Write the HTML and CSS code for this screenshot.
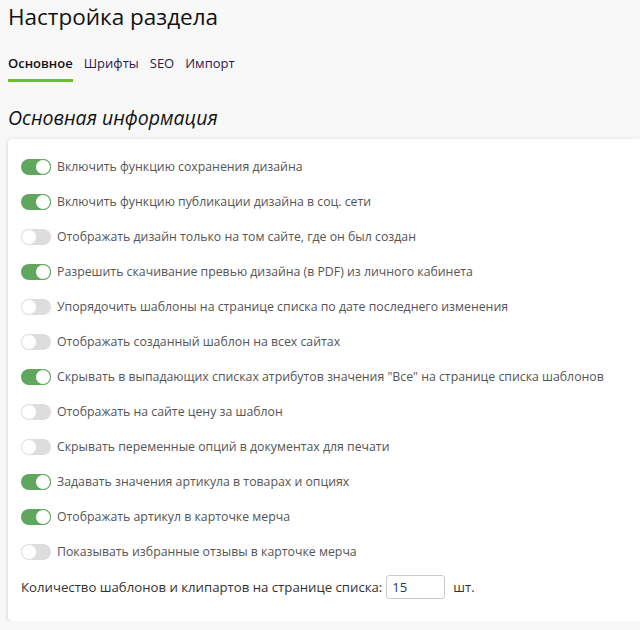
FILE: index.html
```html
<!DOCTYPE html>
<html lang="ru">
<head>
<meta charset="utf-8">
<link rel="stylesheet" href="styles.css">
</head>
<body>
<h1 class="title">Настройка раздела</h1>
<nav class="tabs">
  <a class="tab active">Основное</a>
  <a class="tab">Шрифты</a>
  <a class="tab">SEO</a>
  <a class="tab">Импорт</a>
</nav>
<h2 class="section">Основная информация</h2>
<div class="card">
  <label class="row"><span class="sw on"></span>Включить функцию сохранения дизайна</label>
  <label class="row"><span class="sw on"></span>Включить функцию публикации дизайна в соц. сети</label>
  <label class="row"><span class="sw"></span>Отображать дизайн только на том сайте, где он был создан</label>
  <label class="row"><span class="sw on"></span>Разрешить скачивание превью дизайна (в PDF) из личного кабинета</label>
  <label class="row"><span class="sw"></span>Упорядочить шаблоны на странице списка по дате последнего изменения</label>
  <label class="row"><span class="sw"></span>Отображать созданный шаблон на всех сайтах</label>
  <label class="row"><span class="sw on"></span>Скрывать в выпадающих списках атрибутов значения "Все" на странице списка шаблонов</label>
  <label class="row"><span class="sw"></span>Отображать на сайте цену за шаблон</label>
  <label class="row"><span class="sw"></span>Скрывать переменные опций в документах для печати</label>
  <label class="row"><span class="sw on"></span>Задавать значения артикула в товарах и опциях</label>
  <label class="row"><span class="sw on"></span>Отображать артикул в карточке мерча</label>
  <label class="row"><span class="sw"></span>Показывать избранные отзывы в карточке мерча</label>
  <div class="count">Количество шаблонов и клипартов на странице списка: <input class="num" type="text" value="15"> шт.</div>
</div>
</body>
</html>
```
FILE: styles.css
```css
html, body {
  margin: 0;
  padding: 0;
  background: #f8f8f8;
  font-family: "Open Sans", "Noto Sans", sans-serif;
  color: #333;
  overflow: hidden;
}
body {
  padding: 0 0 0 8px;
}
.title {
  margin: 0;
  padding-top: 2px;
  font-size: 22.5px;
  font-weight: 400;
  line-height: 30px;
  color: #111;
}
.tabs {
  display: flex;
  gap: 11px;
  margin-top: 21px;
  font-size: 13px;
  line-height: 20px;
}
.tab {
  color: #2a1a4a;
  padding-bottom: 6px;
  border-bottom: 3px solid transparent;
}
.tab.active {
  font-weight: 600;
  color: #111;
  border-bottom-color: #6bbf26;
}
.section {
  margin: 22px 0 0;
  font-size: 19.5px;
  font-style: italic;
  font-weight: 400;
  line-height: 28px;
  color: #111;
}
.card {
  margin-top: 7px;
  background: #fff;
  border-radius: 4px 0 0 4px;
  box-shadow: 0 1px 4px rgba(0,0,0,0.18);
  padding: 10px 0 22px 13px;
}
.row {
  display: flex;
  align-items: center;
  height: 35px;
  font-size: 12.3px;
  color: #555;
}
.sw {
  position: relative;
  width: 30px;
  height: 16px;
  border-radius: 8px;
  background: #ddd;
  margin-right: 6px;
  flex: none;
}
.sw::after {
  content: "";
  position: absolute;
  top: 0;
  left: 0;
  width: 14px;
  height: 14px;
  border-radius: 50%;
  background: #fff;
  border: 1px solid #e2e2e2;
}
.sw.on {
  background: #5fa65f;
}
.sw.on::after {
  left: 14px;
  border-color: #5fa65f;
}
.count {
  display: flex;
  align-items: center;
  gap: 4px;
  margin-top: 6px;
  font-size: 13.2px;
  color: #333;
}
.num {
  width: 47px;
  height: 22px;
  box-sizing: content-box;
  border: 1px solid #ccc;
  border-radius: 3px;
  padding: 0 5px;
  font-family: inherit;
  font-size: 13px;
  color: #1a3a66;
  margin-right: 4px;
}
```
